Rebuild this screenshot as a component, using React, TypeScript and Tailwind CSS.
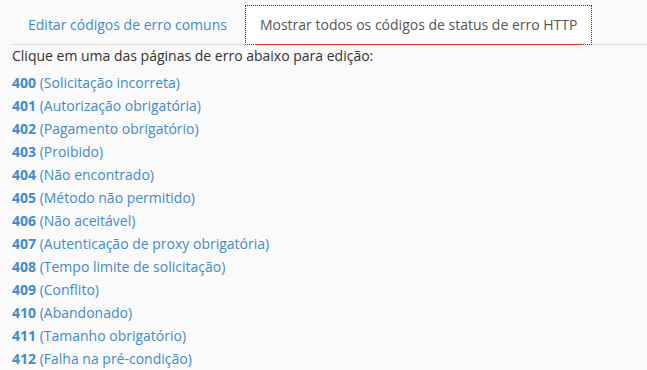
import React from "react";

const codes: [string, string][] = [
  ["400", "Solicitação incorreta"],
  ["401", "Autorização obrigatória"],
  ["402", "Pagamento obrigatório"],
  ["403", "Proibido"],
  ["404", "Não encontrado"],
  ["405", "Método não permitido"],
  ["406", "Não aceitável"],
  ["407", "Autenticação de proxy obrigatória"],
  ["408", "Tempo limite de solicitação"],
  ["409", "Conflito"],
  ["410", "Abandonado"],
  ["411", "Tamanho obrigatório"],
  ["412", "Falha na pré-condição"],
];

export default function App() {
  return (
    <div
      className="min-h-[370px] w-full overflow-hidden bg-[#fafafa] pl-3 pt-[5px] text-[14px] text-[#333]"
      style={{ fontFamily: '"Open Sans", "Liberation Sans", sans-serif' }}
    >
      {/* tabs */}
      <div className="flex border-b border-[#ddd]">
        <a href="#" className="mr-[2px] mb-[-1px] px-[16px] py-[10px] leading-5 text-[#428bca]">
          Editar códigos de erro comuns
        </a>
        <div className="relative mb-[-1px] bg-white px-[15px] py-[10px] leading-5 text-[#555] outline-1 outline-dotted outline-[#333] -outline-offset-1">
          Mostrar todos os códigos de status de erro HTTP
          <span className="absolute bottom-0 left-[10px] right-[11px] h-px bg-[#d9332b]" />
        </div>
      </div>

      <p className="leading-5 pt-px">Clique em uma das páginas de erro abaixo para edição:</p>

      <ul className="mt-[5px]">
        {codes.map(([code, label]) => (
          <li key={code} className="leading-[23px]">
            <a href="#" className="text-[#428bca]">
              <b className="font-bold">{code}</b> ({label})
            </a>
          </li>
        ))}
      </ul>
    </div>
  );
}
